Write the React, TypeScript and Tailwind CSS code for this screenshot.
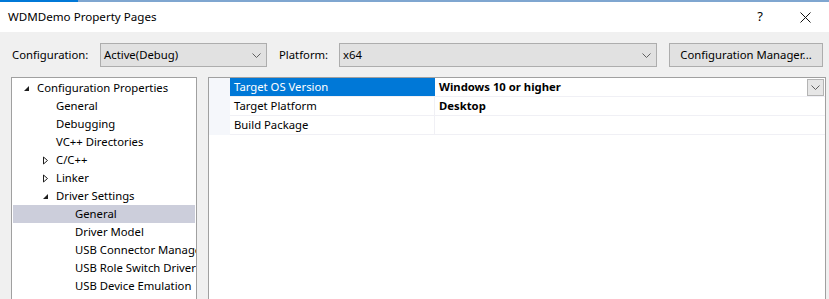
import React from "react";

const font = { fontFamily: '"Noto Sans", "Segoe UI", sans-serif' };

function Chevron({ className = "" }: { className?: string }) {
  return (
    <svg width="9" height="5" viewBox="0 0 9 5" className={className}>
      <path d="M0.5 0.5 L4.5 4.5 L8.5 0.5" fill="none" stroke="#5f5f5f" strokeWidth="1" />
    </svg>
  );
}

function Expanded() {
  return (
    <svg width="7" height="7" viewBox="0 0 7 7">
      <path d="M6 1 L6 6 L1 6 Z" fill="#1e1e1e" />
    </svg>
  );
}

function Collapsed() {
  return (
    <svg width="7" height="9" viewBox="0 0 7 9">
      <path d="M1.5 1 L5.5 4.5 L1.5 8 Z" fill="none" stroke="#1e1e1e" strokeWidth="1" />
    </svg>
  );
}

type Node = { label: string; level: number; icon?: "open" | "closed"; selected?: boolean };

const tree: Node[] = [
  { label: "Configuration Properties", level: 0, icon: "open" },
  { label: "General", level: 1 },
  { label: "Debugging", level: 1 },
  { label: "VC++ Directories", level: 1 },
  { label: "C/C++", level: 1, icon: "closed" },
  { label: "Linker", level: 1, icon: "closed" },
  { label: "Driver Settings", level: 1, icon: "open" },
  { label: "General", level: 2, selected: true },
  { label: "Driver Model", level: 2 },
  { label: "USB Connector Management", level: 2 },
  { label: "USB Role Switch Driver", level: 2 },
  { label: "USB Device Emulation", level: 2 },
];

const indent = ["pl-[10px]", "pl-[29px]", "pl-[48px]"];

export default function App() {
  return (
    <div className="w-[829px] h-[299px] overflow-hidden bg-[#f0f0f0] text-[11.3px] text-black" style={font}>
      {/* title bar */}
      <div className="flex h-[2px]">
        <div className="w-[78px] bg-[#0078d7]" />
        <div className="flex-1 bg-[#7fa6d0]" />
      </div>
      <div className="h-[30px] bg-white flex items-center pl-[8px]">
        <span className="text-[11.6px]">WDMDemo Property Pages</span>
        <span className="ml-auto w-[46px] text-center text-[13px]">?</span>
        <span className="w-[46px] flex justify-center pr-[2px]">
          <svg width="11" height="11" viewBox="0 0 11 11">
            <path d="M0.5 0.5 L10.5 10.5 M10.5 0.5 L0.5 10.5" stroke="#111" strokeWidth="1" />
          </svg>
        </span>
      </div>

      {/* toolbar */}
      <div className="flex items-center h-[24px] mt-[11px] pl-[12px]">
        <span className="w-[88px]">Configuration:</span>
        <div className="w-[167px] h-[24px] border border-[#adadad] bg-[#e1e1e1] flex items-center pl-[3px] pr-[5px]">
          <span>Active(Debug)</span>
          <Chevron className="ml-auto" />
        </div>
        <span className="ml-[12px] w-[60px]">Platform:</span>
        <div className="w-[318px] h-[24px] border border-[#adadad] bg-[#e1e1e1] flex items-center pl-[3px] pr-[5px]">
          <span>x64</span>
          <Chevron className="ml-auto" />
        </div>
        <button className="ml-[12px] w-[154px] h-[24px] border border-[#adadad] bg-[#e1e1e1] flex items-center justify-center">
          Configuration Manager...
        </button>
      </div>

      {/* panels */}
      <div className="flex mt-[10px] pl-[11px] h-[240px]">
        <div className="w-[186px] shrink-0 h-full border border-[#a0a0a0] bg-white pt-[1px] px-[1px] overflow-hidden">
          {tree.map((n, i) => (
            <div
              key={i}
              className={`h-[18px] flex items-center whitespace-nowrap ${indent[n.level]} ${n.selected ? "bg-[#cccedb]" : ""}`}
            >
              <span className="w-[13px] shrink-0 flex items-center">
                {n.icon === "open" && <Expanded />}
                {n.icon === "closed" && <Collapsed />}
              </span>
              <span className="ml-[1px] shrink-0">{n.label}</span>
            </div>
          ))}
        </div>

        <div className="ml-[11px] w-[618px] h-full border border-[#a0a0a0] bg-white flex flex-col">
          <div className="flex">
            <div className="w-[21px] h-[57px] bg-[#f5f7fb]" />
            <div className="flex-1 flex flex-col">
              <div className="flex h-[19px] border-b border-[#f0f0f5]">
                <div className="w-[205px] bg-[#0078d7] text-white pl-[4px] flex items-center">Target OS Version</div>
                <div className="flex-1 font-bold pl-[4px] flex items-center">Windows 10 or higher</div>
                <div className="w-[17px] h-[17px] my-[1px] mr-[1px] border border-[#b4b4b4] bg-[#e6e6e6] flex items-center justify-center">
                  <Chevron />
                </div>
              </div>
              <div className="flex h-[19px] border-b border-[#f0f0f5]">
                <div className="w-[205px] pl-[4px] flex items-center border-r border-[#f0f0f5]">Target Platform</div>
                <div className="flex-1 font-bold pl-[4px] flex items-center">Desktop</div>
              </div>
              <div className="flex h-[19px] border-b border-[#f0f0f5]">
                <div className="w-[205px] pl-[4px] flex items-center border-r border-[#f0f0f5]">Build Package</div>
                <div className="flex-1" />
              </div>
            </div>
          </div>
        </div>
      </div>
    </div>
  );
}
